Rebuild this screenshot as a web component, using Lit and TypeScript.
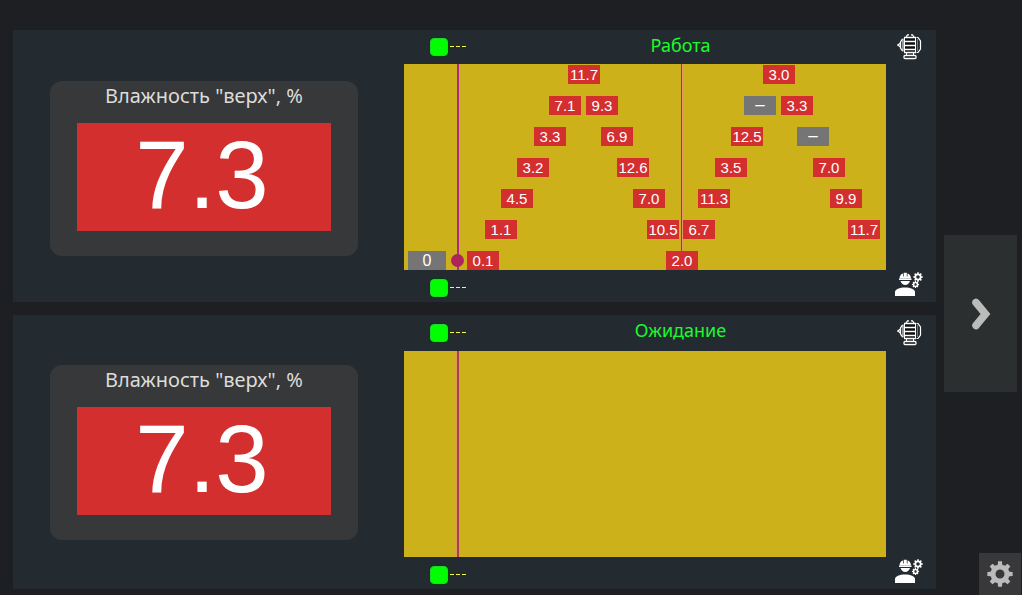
import { LitElement, html, css, svg, nothing } from "lit";
import { customElement, property } from "lit/decorators.js";
import { classMap } from "lit/directives/class-map.js";
import { styleMap } from "lit/directives/style-map.js";

interface Reading {
  /** Centre of the label on the plot, in plot units (0..PLOT_WIDTH). */
  x: number;
  /** Level from the top, 0..6. */
  row: number;
  value: string;
  muted?: boolean;
  wide?: boolean;
}

const PLOT_WIDTH = 482;
const PLOT_HEIGHT = 206;
const ROW_STEP = 31;
const FIRST_ROW = 1;

const READINGS: Reading[] = [
  { x: 180, row: 0, value: "11.7" },
  { x: 375, row: 0, value: "3.0" },
  { x: 161, row: 1, value: "7.1" },
  { x: 198, row: 1, value: "9.3" },
  { x: 356, row: 1, value: "–", muted: true },
  { x: 393, row: 1, value: "3.3" },
  { x: 146, row: 2, value: "3.3" },
  { x: 213, row: 2, value: "6.9" },
  { x: 343, row: 2, value: "12.5" },
  { x: 409, row: 2, value: "–", muted: true },
  { x: 129, row: 3, value: "3.2" },
  { x: 229, row: 3, value: "12.6" },
  { x: 327, row: 3, value: "3.5" },
  { x: 425, row: 3, value: "7.0" },
  { x: 113, row: 4, value: "4.5" },
  { x: 245, row: 4, value: "7.0" },
  { x: 310, row: 4, value: "11.3" },
  { x: 442, row: 4, value: "9.9" },
  { x: 97, row: 5, value: "1.1" },
  { x: 259, row: 5, value: "10.5" },
  { x: 295, row: 5, value: "6.7" },
  { x: 460, row: 5, value: "11.7" },
  { x: 23, row: 6, value: "0", muted: true, wide: true },
  { x: 79, row: 6, value: "0.1" },
  { x: 278, row: 6, value: "2.0" },
];

const pctX = (x: number) => `${(x / PLOT_WIDTH) * 100}%`;
const pctY = (y: number) => `${(y / PLOT_HEIGHT) * 100}%`;

/** Toothed wheel outline around (cx, cy) with a round hole. */
function gearPath(cx: number, cy: number, outer: number, inner: number, hole: number, teeth = 8) {
  const pts: string[] = [];
  const step = (Math.PI * 2) / teeth;
  for (let i = 0; i < teeth; i++) {
    const a = i * step - Math.PI / 2;
    for (const [r, d] of [[inner, -0.3], [outer, -0.2], [outer, 0.2], [inner, 0.3]]) {
      const t = a + d * step;
      pts.push(`${(cx + r * Math.cos(t)).toFixed(2)} ${(cy + r * Math.sin(t)).toFixed(2)}`);
    }
  }
  return `M${pts.join("L")}Z M${cx - hole} ${cy}a${hole} ${hole} 0 1 0 ${hole * 2} 0a${hole} ${hole} 0 1 0 ${-hole * 2} 0Z`;
}

const motorIcon = html`<svg width="25" height="26" viewBox="0 0 25 26" fill="none" aria-hidden="true">
  <rect x="7" y="3" width="12" height="16" fill="#0c0f11" />
  <path d="M9 3L10.5 .8H12M14 .8H15.500L17 3" stroke="#fff" stroke-width="1.200" />
  <path d="M7 3.500H19M7 7.500H19M7 11.500H19M7 15.500H19M7 18.500H19" stroke="#fff" stroke-width="1.400" />
  <path d="M6 4.500V17.500" stroke="#9a9d9f" stroke-width="2" />
  <path d="M7.500 3V19M18.500 3V19" stroke="#fff" />
  <path d="M5.500 5L3.500 8V14L5.500 17M3.500 9L.8 11L3.500 13" stroke="#fff" stroke-width="1.300" />
  <path d="M19.500 3.500H21L23.500 7V15L21 18.500H19.500" stroke="#fff" stroke-width="1.200" />
  <path d="M20.500 5V17" stroke="#72777a" />
  <path d="M9.500 19V22M16.500 19V22" stroke="#fff" />
  <rect x="7" y="21.500" width="12" height="3" rx="1" stroke="#fff" stroke-width="1.300" fill="#0c0f11" />
</svg>`;

const workerIcon = html`<svg width="28" height="25" viewBox="0 0 28 25" fill="#fff" aria-hidden="true">
  <path d="M4.500 6.500C4.500 3.800 6 2 8 1.500V4.500H8.700V.8H11.800V4.500H12.500V1.500C14.500 2 16 3.800 16 6.500Z" />
  <path d="M4 6.500H16.500V8H4Z" />
  <path d="M5.500 9H15C14.500 11.300 12.500 13 10.200 13S6 11.300 5.500 9Z" />
  <path d="M0 24V20C0 17.500 4.500 15.500 10 15.500S20 17.500 20 20V24Z" />
  <path fill-rule="evenodd" d=${gearPath(23, 5, 4.8, 3.6, 1.8)} />
  <path fill-rule="evenodd" d=${gearPath(20.5, 12.5, 3.6, 2.7, 1.2)} />
</svg>`;

@customElement("edge-marker")
export class EdgeMarker extends LitElement {
  static styles = css`
    :host {
      display: flex;
      align-items: center;
      gap: 2px;
    }
    .lamp {
      width: 18px;
      height: 18px;
      border-radius: 4px;
      box-sizing: border-box;
      background: #00ff00;
      border: 1px solid #1fd92c;
      box-shadow: 0 0 0 1px #0c3a14;
    }
    .dashes {
      display: block;
    }
  `;

  render() {
    return html`<span class="lamp"></span>
      <svg class="dashes" width="16" height="2" viewBox="0 0 16 2" aria-hidden="true">
        <path d="M0 .5H16" stroke="#fbf64a" stroke-dasharray="4 2" />
      </svg>`;
  }
}

@customElement("moisture-card")
export class MoistureCard extends LitElement {
  static styles = css`
    :host {
      display: block;
      box-sizing: border-box;
      padding: 0 27px 25px;
      border-radius: 12px;
      background: #373839;
    }
    .label {
      display: block;
      height: 42px;
      line-height: 30px;
      font-size: 20px;
      text-align: center;
      white-space: nowrap;
      color: #dcdcdc;
    }
    .value {
      display: block;
      box-sizing: border-box;
      height: 108px;
      padding-right: 4px;
      line-height: 104px;
      background: #d32f2f;
      color: #fff;
      font-family: "Liberation Sans", Arial, sans-serif;
      font-size: 96px;
      font-kerning: none;
      text-align: center;
    }
  `;

  @property() value = "";

  render() {
    return html`<label class="label" for="value">Влажность "верх", %</label>
      <output class="value" id="value">${this.value}</output>`;
  }
}

@customElement("grain-plot")
export class GrainPlot extends LitElement {
  static styles = css`
    :host {
      display: block;
      position: relative;
      height: 206px;
      background: #ccb11a;
      font-family: "Liberation Sans", Arial, sans-serif;
    }
    .line {
      position: absolute;
      top: 0;
      bottom: 0;
      width: 2px;
      background: #ab2a8c;
    }
    .line.idle {
      background: #a8404a;
      border: solid #dc9a5c;
      border-width: 0 1px;
      transform: translateX(-1px);
    }
    .line.thin {
      width: 1px;
      background: #a83232;
      border-right: 1px solid #e8966a;
    }
    .dot {
      position: absolute;
      width: 13px;
      height: 13px;
      margin: -6px 0 0 -6px;
      border-radius: 50%;
      background: #b0245c;
    }
    .chip {
      position: absolute;
      width: 32px;
      height: 19px;
      line-height: 19px;
      font-size: 15px;
      text-align: center;
      color: #fff;
      background: #d32f2f;
      transform: translateX(-50%);
    }
    .chip.muted {
      line-height: 17px;
      font-size: 17px;
      background: #757575;
    }
    .chip.wide {
      width: 38px;
      line-height: 19px;
      font-size: 16px;
    }
  `;

  @property({ attribute: false }) readings: Reading[] = [];

  render() {
    const live = this.readings.length > 0;
    return html`
      <span class=${classMap({ line: true, idle: !live })} style=${styleMap({ left: pctX(53) })}></span>
      ${live
        ? html`<span class="line thin" style=${styleMap({ left: pctX(277) })}></span>
            <span class="dot" style=${styleMap({ left: pctX(53), top: pctY(196) })}></span>`
        : nothing}
      ${this.readings.map(
        (r) => html`<span
          class=${classMap({ chip: true, muted: !!r.muted, wide: !!r.wide })}
          style=${styleMap({ left: pctX(r.x), top: pctY(FIRST_ROW + r.row * ROW_STEP) })}
          >${r.value}</span
        >`
      )}
    `;
  }
}

@customElement("dryer-panel")
export class DryerPanel extends LitElement {
  static styles = css`
    :host {
      display: grid;
      grid-template-columns: minmax(0, 391fr) minmax(0, 532fr);
      align-items: start;
      background: #242b30;
      --head: 34px;
      --card-top: 51px;
    }
    :host([idle]) {
      --head: 36px;
      --card-top: 50px;
    }
    .card {
      margin: var(--card-top) 46px 0 37px;
    }
    .head,
    .foot {
      display: flex;
      padding: 0 13px 0 26px;
    }
    .head {
      height: var(--head);
      align-items: center;
    }
    .foot {
      height: 32px;
      justify-content: space-between;
    }
    .foot .marker {
      height: 36px;
    }
    .title {
      flex: 1;
      align-self: flex-start;
      margin: 0;
      padding-top: 3px;
      font-size: 18px;
      line-height: 24px;
      font-weight: 400;
      text-align: center;
      color: #1bfb2b;
    }
    .plot {
      margin-right: 50px;
    }
    .icon {
      display: flex;
      width: 28px;
      padding: 2px 0;
      border: 0;
      background: none;
      justify-content: center;
      align-items: flex-start;
      cursor: pointer;
    }
  `;

  @property() name = "";
  @property() value = "";
  @property({ type: Boolean, reflect: true }) idle = false;
  @property({ attribute: false }) readings: Reading[] = [];

  render() {
    return html`
      <moisture-card class="card" .value=${this.value}></moisture-card>
      <section>
        <header class="head">
          <edge-marker></edge-marker>
          <h2 class="title">${this.name}</h2>
          <button class="icon" aria-label="Двигатель">${motorIcon}</button>
        </header>
        <grain-plot class="plot" .readings=${this.readings}></grain-plot>
        <footer class="foot">
          <edge-marker class="marker"></edge-marker>
          <button class="icon" aria-label="Оператор">${workerIcon}</button>
        </footer>
      </section>
    `;
  }
}

@customElement("app-root")
export class AppRoot extends LitElement {
  static styles = css`
    :host {
      display: grid;
      grid-template-columns: minmax(0, 1fr) 86px;
      box-sizing: border-box;
      min-height: 100vh;
      padding: 30px 0 0 13px;
      background: #1e1f22;
      font-family: "Noto Sans", sans-serif;
    }
    .panels {
      display: flex;
      flex-direction: column;
      gap: 13px;
    }
    .side {
      display: grid;
      grid-template-rows: 1fr auto 1fr;
      padding-top: 2px;
    }
    .next,
    .settings {
      display: flex;
      align-items: center;
      justify-content: center;
      border: 0;
      padding: 0;
      cursor: pointer;
    }
    .next {
      grid-row: 2;
      height: 157px;
      margin: 0 5px 0 8px;
      background: #2b2f2f;
    }
    .settings {
      grid-row: 3;
      align-self: end;
      justify-self: end;
      width: 42px;
      height: 42px;
      margin-right: 1px;
      background: #38383a;
    }
  `;

  render() {
    return html`
      <main class="panels">
        <dryer-panel name="Работа" value="7.3" .readings=${READINGS}></dryer-panel>
        <dryer-panel name="Ожидание" value="7.3" idle></dryer-panel>
      </main>
      <nav class="side">
        <button class="next" aria-label="Далее">
          <svg width="20" height="32" viewBox="0 0 20 32" fill="none" aria-hidden="true">
            <path d="M5 4.500L14.500 16L5 27.500" stroke="#bbb" stroke-width="7.500" stroke-linecap="round" />
          </svg>
        </button>
        <button class="settings" aria-label="Настройки">
          <svg width="26" height="26" viewBox="0 0 26 26" fill="#bbb" aria-hidden="true">
            ${svg`<path fill-rule="evenodd" d=${gearPath(13, 13, 12.8, 9.6, 4.5)} />`}
          </svg>
        </button>
      </nav>
    `;
  }
}
